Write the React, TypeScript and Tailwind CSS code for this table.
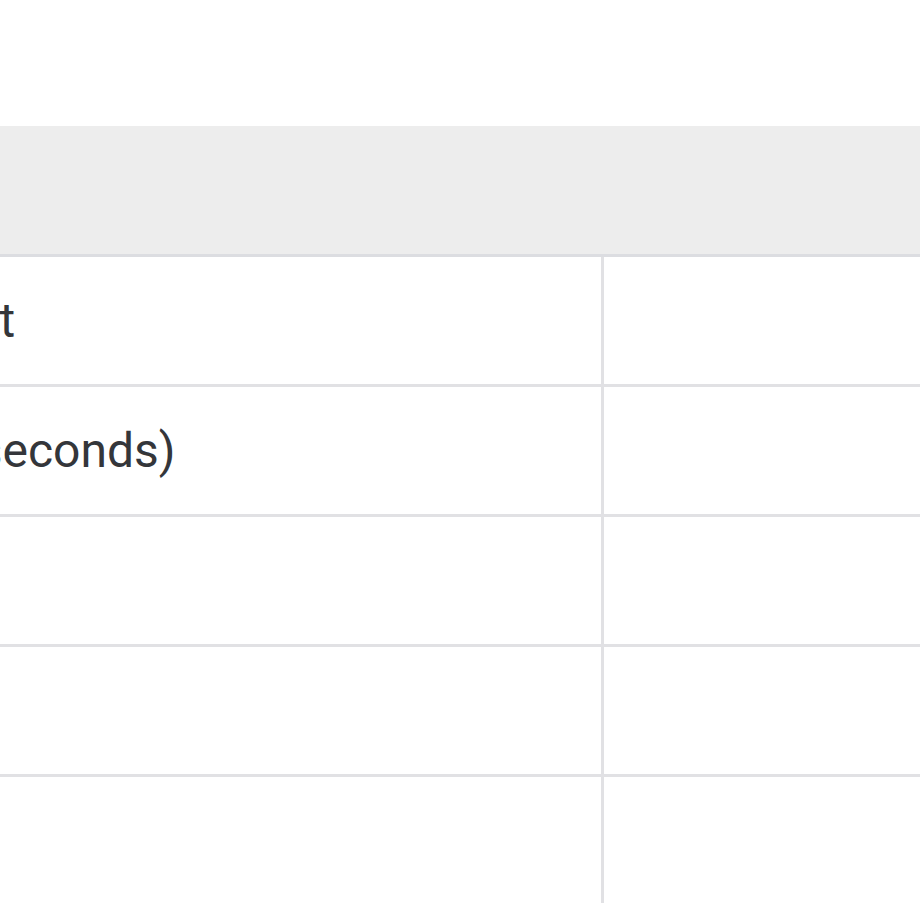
const rows = [
  { name: "Retry count", value: "" },
  { name: "Timeout (seconds)", value: "" },
  { name: "", value: "" },
  { name: "", value: "" },
  { name: "", value: "" },
];

export default function App() {
  return (
    <div className="w-[920px] h-[920px] overflow-hidden bg-white font-['Roboto','Liberation_Sans',sans-serif]">
      <div className="h-[126px]" />
      <div className="ml-[-276px] w-[1400px]">
        {/* Header */}
        <div className="h-[131px] bg-[#ededed] border-b-[3px] border-[#dcdde1]" />
        {/* Body */}
        {rows.map((row, i) => (
          <div
            key={i}
            className={
              "grid grid-cols-[880px_1fr] " +
              (i < rows.length - 1 ? "h-[130px] border-b-[3px] border-[#e1e1e4]" : "h-[126px]")
            }
          >
            <div className="flex items-center pl-[48px] border-r-[3px] border-[#e1e1e4] text-[48px] leading-none text-[#34363a] whitespace-nowrap">
              {row.name}
            </div>
            <div className="flex items-center pl-[48px] text-[48px] leading-none text-[#34363a]">
              {row.value}
            </div>
          </div>
        ))}
      </div>
    </div>
  );
}
